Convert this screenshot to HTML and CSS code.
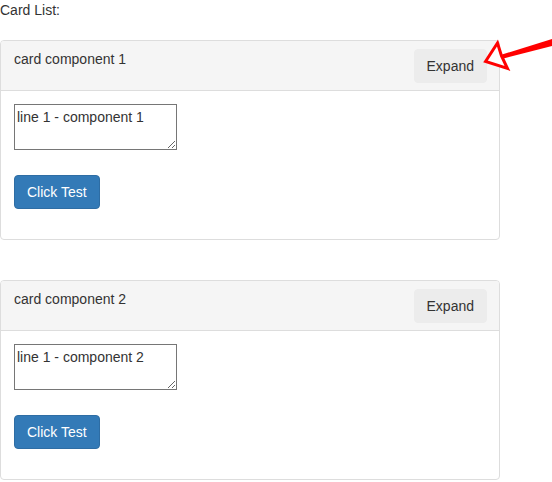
FILE: index.html
```html
<!DOCTYPE html>
<html>
<head>
<meta charset="utf-8">
<title>Card List</title>
<link rel="stylesheet" href="styles.css">
</head>
<body>
<p class="list-label">Card List:</p>
<div class="card-list">
  <div class="card">
    <div class="card-heading">
      <span class="card-title">card component 1</span>
      <button class="btn-expand">Expand</button>
    </div>
    <div class="card-body">
      <textarea class="line-input">line 1 - component 1</textarea>
      <button class="btn-primary">Click Test</button>
    </div>
  </div>
  <div class="card">
    <div class="card-heading">
      <span class="card-title">card component 2</span>
      <button class="btn-expand">Expand</button>
    </div>
    <div class="card-body">
      <textarea class="line-input">line 1 - component 2</textarea>
      <button class="btn-primary">Click Test</button>
    </div>
  </div>
</div>
<svg class="annotation-arrow" width="72" height="45" viewBox="480 30 72 45">
  <path d="M502 54.5 L552 39 L552 46 L503.5 58.5 Z" fill="#f00"/>
  <path d="M485.5 61.5 L497.5 43 L501.5 56 L507.5 68.5 Z" fill="#fff" stroke="#f00" stroke-width="3" stroke-linejoin="miter"/>
</svg>
</body>
</html>
```

FILE: styles.css
```css
html, body {
  margin: 0;
  padding: 0;
}
body {
  font-family: "Liberation Sans", Arial, sans-serif;
  font-size: 14px;
  line-height: 20px;
  color: #333;
  background: #fff;
  position: relative;
}
.list-label {
  margin: 0 0 20px 0;
}
.card-list {
  display: flex;
  flex-direction: column;
  gap: 40px;
}
.card {
  width: 500px;
  box-sizing: border-box;
  border: 1px solid #ddd;
  border-radius: 4px;
  background: #fff;
}
.card-heading {
  display: flex;
  justify-content: space-between;
  align-items: flex-start;
  padding: 8px 12px 7px 13px;
  background: #f5f5f5;
  border-bottom: 1px solid #ddd;
  border-radius: 3px 3px 0 0;
}
.card-title {
  display: block;
  line-height: 20px;
}
.btn-expand {
  font: inherit;
  color: #333;
  background: #ececec;
  border: 1px solid #ececec;
  border-radius: 4px;
  padding: 6px 12px;
  line-height: 20px;
  height: 34px;
  margin: 0;
}
.card-body {
  padding: 13px 13px 30px 13px;
  display: flex;
  flex-direction: column;
  align-items: flex-start;
}
.line-input {
  display: block;
  box-sizing: border-box;
  width: 163px;
  height: 46px;
  margin: 0 0 25px 0;
  padding: 2px;
  border: 1px solid #767676;
  border-radius: 0;
  font: inherit;
  line-height: 20px;
  color: #333;
}
.btn-primary {
  font: inherit;
  color: #fff;
  background: #337ab7;
  border: 1px solid #2e6da4;
  border-radius: 4px;
  padding: 6px 12px;
  line-height: 20px;
  height: 34px;
  margin: 0;
}
.annotation-arrow {
  position: absolute;
  left: 480px;
  top: 30px;
  overflow: visible;
}
```
